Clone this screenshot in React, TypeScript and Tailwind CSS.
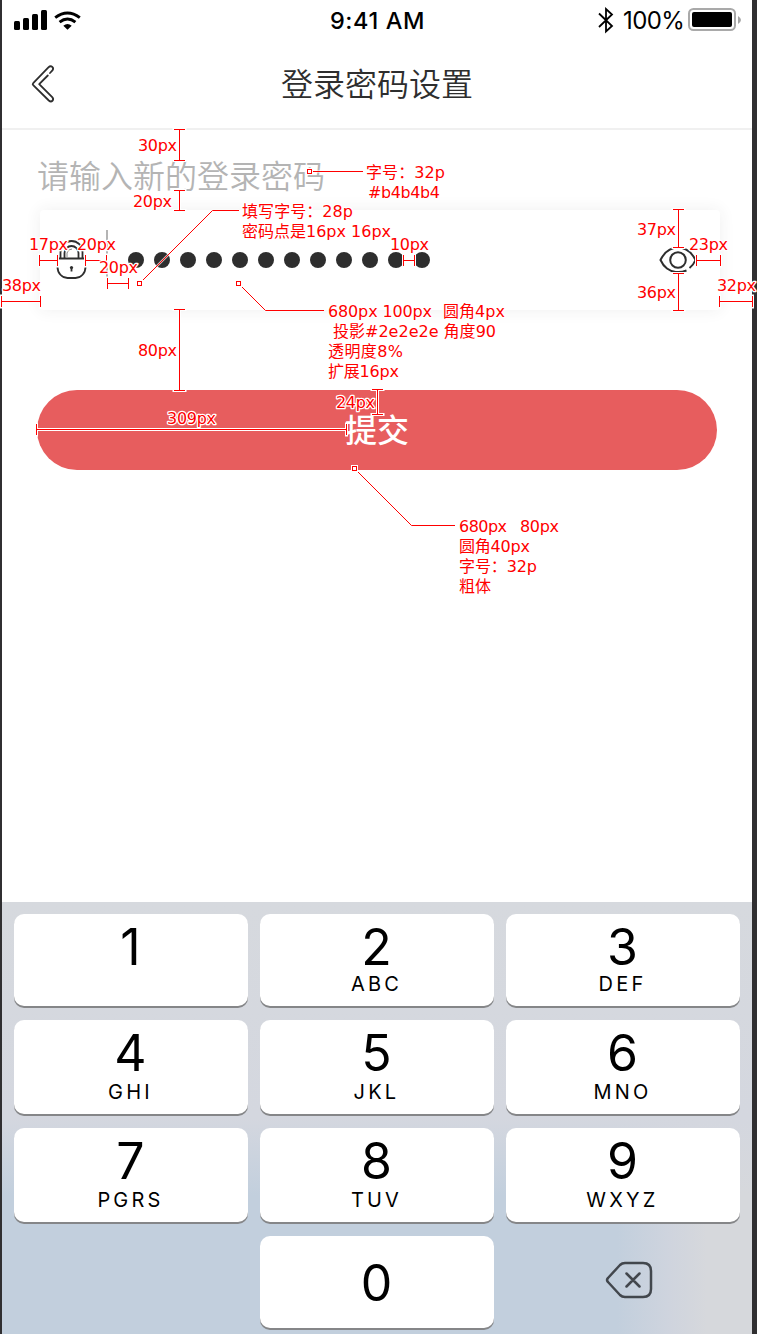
import type { ReactNode } from "react";

const keys: [string, string][] = [
  ["1", ""], ["2", "ABC"], ["3", "DEF"],
  ["4", "GHI"], ["5", "JKL"], ["6", "MNO"],
  ["7", "PGRS"], ["8", "TUV"], ["9", "WXYZ"],
];

type Measure = { x1: number; y1: number; x2: number; y2: number };
const measures: Measure[] = [
  { x1: 179.5, y1: 129.5, x2: 179.5, y2: 160.5 },
  { x1: 179.5, y1: 190.5, x2: 179.5, y2: 210.5 },
  { x1: 179.5, y1: 309.5, x2: 179.5, y2: 390.5 },
  { x1: 678.5, y1: 209.5, x2: 678.5, y2: 247.5 },
  { x1: 678.5, y1: 273.5, x2: 678.5, y2: 310.5 },
  { x1: 377.5, y1: 389.5, x2: 377.5, y2: 414.5 },
  { x1: 39.5, y1: 260.5, x2: 57.5, y2: 260.5 },
  { x1: 85.5, y1: 260.5, x2: 106.5, y2: 260.5 },
  { x1: 107.5, y1: 283.5, x2: 128.5, y2: 283.5 },
  { x1: 403.5, y1: 260.5, x2: 414.5, y2: 260.5 },
  { x1: 696.5, y1: 260.5, x2: 720.5, y2: 260.5 },
  { x1: 1.5, y1: 301.5, x2: 40.5, y2: 301.5 },
  { x1: 719.5, y1: 301.5, x2: 752.5, y2: 301.5 },
  { x1: 36.5, y1: 429.5, x2: 346.5, y2: 429.5 },
];

const notes: [number, number, string, number][] = [
  [138, 151, "30px", 39], [133, 207, "20px", 39], [138, 356, "80px", 39],
  [637, 235, "37px", 39], [637, 298, "36px", 39], [689, 250, "23px", 39],
  [717, 291, "32px", 39], [2, 291, "38px", 39], [29, 250, "17px", 39],
  [77, 250, "20px", 39], [99, 273, "20px", 39], [390, 250, "10px", 39],
  [336, 408, "24px", 39], [167, 424, "309px", 49],
  [366, 178, "字号：32p", 79], [368, 198, "#b4b4b4", 72],
  [242, 217, "填写字号：28p", 111], [242, 237, "密码点是16px 16px", 149],
  [328, 317, "680px 100px", 104], [443, 317, "圆角4px", 62],
  [333, 337, "投影#2e2e2e 角度90", 163], [328, 357, "透明度8%", 75], [328, 377, "扩展16px", 71],
  [459, 532, "680px", 48], [520, 532, "80px", 39], [459, 552, "圆角40px", 71],
  [459, 572, "字号：32p", 78], [459, 592, "粗体", 32],
];

const leaders = [
  "M311.5 171.5H363", "M139.5 283.5L212.5 210.5H239",
  "M238.5 283.5L265.5 310.5H324", "M354.5 468.5L411.5 525.5H455",
];
const anchors: [number, number][] = [[309.5, 171.5], [139.5, 283.5], [238.5, 283.5], [354.5, 468.5]];

function measurePath({ x1, y1, x2, y2 }: Measure) {
  return x1 === x2
    ? `M${x1} ${y1}V${y2}M${x1 - 5.5} ${y1}h11M${x1 - 5.5} ${y2}h11`
    : `M${x1} ${y1}H${x2}M${x1} ${y1 - 5.5}v11M${x2} ${y1 - 5.5}v11`;
}

function Redlines() {
  return (
    <svg className="pointer-events-none absolute left-0 top-0" width="757" height="1334" fill="none">
      {measures.map((m, i) => (
        <g key={i}>
          <path d={measurePath(m)} stroke="#fff" strokeWidth="3" strokeLinecap="square" />
          <path d={measurePath(m)} stroke="#ff0000" />
        </g>
      ))}
      {leaders.map((d) => (
        <g key={d}>
          <path d={d} stroke="#fff" strokeOpacity=".7" strokeWidth="2.4" />
          <path d={d} stroke="#ff0000" />
        </g>
      ))}
      {anchors.map(([x, y]) => (
        <g key={`${x}-${y}`}>
          <rect x={x - 2} y={y - 2} width="4" height="4" fill="#fff" stroke="#fff" strokeWidth="3" />
          <rect x={x - 2} y={y - 2} width="4" height="4" stroke="#ff0000" />
        </g>
      ))}
      <g
        className="whitespace-pre font-['DejaVu_Sans','Noto_Sans_CJK_SC',sans-serif] text-[16px]"
        fill="#ff0000" stroke="#fff" strokeWidth="2.5" strokeLinejoin="round" paintOrder="stroke"
      >
        {notes.map(([x, y, t, w], i) => (
          <text key={i} x={x} y={y} textLength={w}>{t}</text>
        ))}
      </g>
    </svg>
  );
}

function Key({ children }: { children: ReactNode }) {
  return (
    <button className="flex flex-col items-center rounded-[10px] bg-white pr-px pt-1 text-black shadow-[0_2px_0_#858688]">
      {children}
    </button>
  );
}

function StatusBar() {
  return (
    <div className="flex h-10 items-center justify-between pl-3 pr-[11px] font-['Inter',sans-serif] text-black">
      <div className="flex w-[200px] items-center">
        <svg width="34" height="20" viewBox="0 0 34 20">
          <rect x="0" y="11" width="6" height="9" rx="1.5" />
          <rect x="9" y="8" width="6" height="12" rx="1.5" />
          <rect x="18" y="4" width="6" height="16" rx="1.5" />
          <rect x="27" y="0" width="6" height="20" rx="1.5" />
        </svg>
        <svg className="ml-[6px]" width="27" height="19" viewBox="0 0 27 19">
          <path d="M1.2 6.6Q13.5-2.6 25.8 6.6" fill="none" stroke="#000" strokeWidth="3" />
          <path d="M5.6 11.1Q13.5 4.9 21.4 11.1" fill="none" stroke="#000" strokeWidth="3" />
          <path d="M9.3 14.7Q13.5 11.3 17.7 14.7L13.5 18.8Z" />
        </svg>
      </div>
      <div className="pt-[2px] text-[23.5px] font-[550] tracking-[0.6px]">9:41 AM</div>
      <div className="flex w-[200px] items-center justify-end">
        <svg width="16" height="27" viewBox="0 0 16 27" fill="none" stroke="#000" strokeWidth="1.8">
          <path d="M1 6.5L14 19 8 24.5V2l6 5.5L1 20" />
        </svg>
        <span className="ml-[9px] w-[65px] whitespace-nowrap pt-[2px] text-[24px] tracking-[-0.6px]">100%</span>
        <svg width="53" height="24" viewBox="0 0 53 24">
          <rect x="1" y="1" width="46" height="21" rx="4.5" fill="none" stroke="#a9a9a9" strokeWidth="2" />
          <rect x="4" y="4" width="40" height="15" rx="2" />
          <path d="M50 8q6 4 0 8z" fill="#a5a5a5" />
        </svg>
      </div>
    </div>
  );
}

export default function App() {
  return (
    <div className="relative h-[1334px] w-[757px] overflow-hidden">
      <div className="h-full overflow-hidden border-l-2 border-r-[5px] border-[#302f31] bg-white font-['Noto_Sans_CJK_SC',sans-serif]">
        <StatusBar />
        <header className="grid h-[90px] grid-cols-[1fr_auto_1fr] items-center border-b-2 border-[#f0f0f0] px-7">
          <svg width="26" height="42" viewBox="0 0 26 42" fill="none" stroke="#2e2e2e" strokeWidth="1.8" strokeLinecap="round" strokeLinejoin="round">
            <path d="M20 10l2.2-2.3c2.4-3-1-6-3.8-3.4L3.2 20.2q-1 1 0 2L18.800 37.500c2.800 2.500 5.800-.7 3.400-3.400L9.200 21.200 17.800 12.500" />
          </svg>
          <h1 className="-mt-[5px] whitespace-nowrap text-[32px] font-[350] leading-[48px] text-[#2e2e2e]">登录密码设置</h1>
        </header>
        <main className="h-[772px] pl-[35px]">
          <p className="pt-5 text-[32px] font-[350] leading-[48px] text-[#b4b4b4]">请输入新的登录密码</p>
          <div className="ml-[3px] mt-3 flex h-[100px] w-[680px] items-center rounded-[4px] bg-white pl-4 pr-[23px] shadow-[0_0_16px_rgba(46,46,46,0.08)]">
            <svg width="31" height="40" viewBox="0 0 31 40" fill="none" stroke="#2e2e2e" strokeWidth="1.8">
              <path d="M4.5 18v-6a11 11 0 0 1 22 0v6M8.5 18v-5a7 7 0 0 1 14 0v5" />
              <path d="M11 17v-4q1-4 5-4" strokeWidth="1" stroke="#888" />
              <path d="M1.5 18.5h28V27c0 6-4.500 11-10 11h-8c-5.500 0-10-5-10-11z" />
              <circle cx="15.500" cy="27.500" r="1.6" fill="#2e2e2e" stroke="none" />
              <path d="M15.500 27.500v4" />
            </svg>
            <span className="ml-[19px] mt-5 h-[60px] w-[2px] self-start bg-[#b4b4b4]" />
            <div className="ml-5 flex gap-[10px]">
              {Array.from({ length: 12 }, (_, i) => <i key={i} className="size-4 rounded-full bg-[#2e2e2e]" />)}
            </div>
            <svg className="ml-auto" width="38" height="28" viewBox="0 0 38 28" fill="none" stroke="#2e2e2e" strokeWidth="2">
              <path d="M27.500 24.500C20 27.500 12.500 26 8 22.500Q4 19.500 1.500 14C6 5 12 1.500 19 1.500S32 5 36.500 14q-2 5-6 8" />
              <circle cx="19" cy="14" r="7.800" />
            </svg>
          </div>
          <button className="mt-20 flex h-20 w-[680px] items-center justify-center rounded-full bg-[#e75d5e] pb-1 text-[32px] font-medium text-white">提交</button>
        </main>
        <section className="grid h-[432px] grid-cols-[234px_234px_234px] grid-rows-[92px_94px_94px_92px] content-start gap-x-3 gap-y-[14px] bg-[linear-gradient(180deg,#d6d9de_0%,#d4d7df_50%,rgba(212,215,223,0)_68%),linear-gradient(90deg,#c2cfdd_0%,#c2cfdd_82%,#cfd4de_89%,#d6d8dc_94%)] px-3 pt-3 font-['Inter',sans-serif]">
          {keys.map(([n, letters], i) => (
            <Key key={n}>
              <span className="text-[50px] leading-[58px]">{n}</span>
              <span className={`text-[20px] leading-[16px] tracking-[3.2px] ${i > 2 ? "pt-[2px]" : ""}`}>{letters}</span>
            </Key>
          ))}
          <span />
          <Key><span className="pt-[14px] text-[50px] leading-[58px]">0</span></Key>
          <button className="flex items-center justify-center pb-1 pl-[11px]">
            <svg width="48" height="38" viewBox="0 0 48 38" fill="none" stroke="#42474d" strokeWidth="2.5" strokeLinecap="round" strokeLinejoin="round">
              <path d="M20 2h18q8 0 8 8v18q0 8-8 8H20q-3 0-5-2L3 21q-2-2 0-4L15 4q2-2 5-2zM21.500 12.500l13 13m0-13l-13 13" />
            </svg>
          </button>
        </section>
      </div>
      <Redlines />
    </div>
  );
}
